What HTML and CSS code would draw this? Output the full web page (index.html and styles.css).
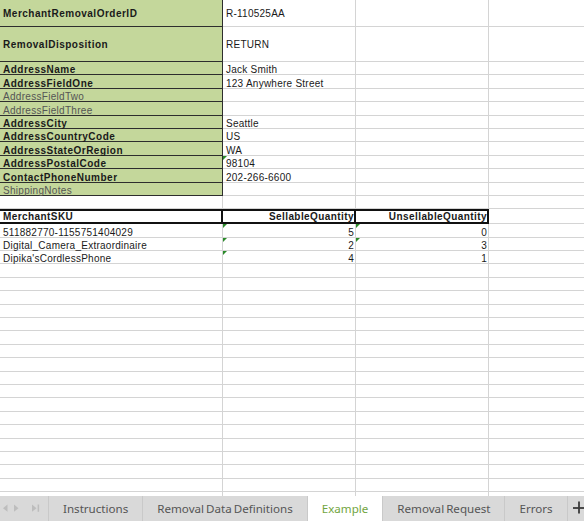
FILE: index.html
```html
<!DOCTYPE html>
<html>
<head>
<meta charset="utf-8">
<link rel="stylesheet" href="styles.css">
</head>
<body>
<div class="sheet">
  <div class="row t1"><div class="c k b">MerchantRemovalOrderID</div><div class="c">R-110525AA</div><div class="c"></div><div class="c"></div></div>
  <div class="row t2"><div class="c k b">RemovalDisposition</div><div class="c">RETURN</div><div class="c"></div><div class="c"></div></div>
  <div class="row"><div class="c k b">AddressName</div><div class="c">Jack Smith</div><div class="c"></div><div class="c"></div></div>
  <div class="row"><div class="c k b">AddressFieldOne</div><div class="c">123 Anywhere Street</div><div class="c"></div><div class="c"></div></div>
  <div class="row"><div class="c k dim">AddressFieldTwo</div><div class="c"></div><div class="c"></div><div class="c"></div></div>
  <div class="row"><div class="c k dim">AddressFieldThree</div><div class="c"></div><div class="c"></div><div class="c"></div></div>
  <div class="row"><div class="c k b">AddressCity</div><div class="c">Seattle</div><div class="c"></div><div class="c"></div></div>
  <div class="row"><div class="c k b">AddressCountryCode</div><div class="c">US</div><div class="c"></div><div class="c"></div></div>
  <div class="row"><div class="c k b">AddressStateOrRegion</div><div class="c">WA</div><div class="c"></div><div class="c"></div></div>
  <div class="row"><div class="c k b">AddressPostalCode</div><div class="c tri">98104</div><div class="c"></div><div class="c"></div></div>
  <div class="row"><div class="c k b">ContactPhoneNumber</div><div class="c">202-266-6600</div><div class="c"></div><div class="c"></div></div>
  <div class="row"><div class="c k dim">ShippingNotes</div><div class="c"></div><div class="c"></div><div class="c"></div></div>
  <div class="row"><div class="c"></div><div class="c"></div><div class="c"></div><div class="c"></div></div>
  <div class="row head"><div class="c h b">MerchantSKU</div><div class="c h b num">SellableQuantity</div><div class="c h b num">UnsellableQuantity</div><div class="c"></div></div>
  <div class="row"><div class="c">511882770-1155751404029</div><div class="c num tri">5</div><div class="c num tri">0</div><div class="c"></div></div>
  <div class="row"><div class="c">Digital_Camera_Extraordinaire</div><div class="c num tri">2</div><div class="c num tri">3</div><div class="c"></div></div>
  <div class="row"><div class="c">Dipika'sCordlessPhone</div><div class="c num tri">4</div><div class="c num">1</div><div class="c"></div></div>
  <div class="row"><div class="c"></div><div class="c"></div><div class="c"></div><div class="c"></div></div>
  <div class="row"><div class="c"></div><div class="c"></div><div class="c"></div><div class="c"></div></div>
  <div class="row"><div class="c"></div><div class="c"></div><div class="c"></div><div class="c"></div></div>
  <div class="row"><div class="c"></div><div class="c"></div><div class="c"></div><div class="c"></div></div>
  <div class="row"><div class="c"></div><div class="c"></div><div class="c"></div><div class="c"></div></div>
  <div class="row"><div class="c"></div><div class="c"></div><div class="c"></div><div class="c"></div></div>
  <div class="row"><div class="c"></div><div class="c"></div><div class="c"></div><div class="c"></div></div>
  <div class="row"><div class="c"></div><div class="c"></div><div class="c"></div><div class="c"></div></div>
  <div class="row"><div class="c"></div><div class="c"></div><div class="c"></div><div class="c"></div></div>
  <div class="row"><div class="c"></div><div class="c"></div><div class="c"></div><div class="c"></div></div>
  <div class="row"><div class="c"></div><div class="c"></div><div class="c"></div><div class="c"></div></div>
  <div class="row"><div class="c"></div><div class="c"></div><div class="c"></div><div class="c"></div></div>
  <div class="row"><div class="c"></div><div class="c"></div><div class="c"></div><div class="c"></div></div>
  <div class="row"><div class="c"></div><div class="c"></div><div class="c"></div><div class="c"></div></div>
  <div class="row"><div class="c"></div><div class="c"></div><div class="c"></div><div class="c"></div></div>
  <div class="row"><div class="c"></div><div class="c"></div><div class="c"></div><div class="c"></div></div>
  <div class="row"><div class="c"></div><div class="c"></div><div class="c"></div><div class="c"></div></div>
  <div class="row"><div class="c"></div><div class="c"></div><div class="c"></div><div class="c"></div></div>
</div>
<div class="tabs">
  <div class="nav">
    <svg width="48" height="25" viewBox="0 0 48 25">
      <polygon points="7.5,8.5 3,12.2 7.5,15.8" fill="#bdbdbd"/>
      <polygon points="14,8.5 18.5,12.2 14,15.8" fill="#bdbdbd"/>
      <polygon points="32,8.5 36.5,12.2 32,15.8" fill="#bdbdbd"/>
      <rect x="37.6" y="8.5" width="1.5" height="7.3" fill="#bdbdbd"/>
    </svg>
  </div>
  <div class="tab">Instructions</div>
  <div class="tab">Removal Data Definitions</div>
  <div class="tab active">Example</div>
  <div class="tab">Removal Request</div>
  <div class="tab">Errors</div>
  <div class="plus">
    <svg width="18" height="25" viewBox="0 0 18 25">
      <line x1="5" y1="12" x2="18" y2="12" stroke="#3a3a3a" stroke-width="1.8"/>
      <line x1="11" y1="5.5" x2="11" y2="17.5" stroke="#3a3a3a" stroke-width="1.8"/>
    </svg>
  </div>
</div>
</body>
</html>
```
FILE: styles.css
```css
html, body {
  margin: 0;
  padding: 0;
}
body {
  width: 584px;
  height: 521px;
  overflow: hidden;
  background: #fff;
  font-family: "Liberation Sans", Arial, sans-serif;
  font-size: 10px;
  color: #1a1a1a;
}
.sheet {
  height: 496px;
  overflow: hidden;
}
.row {
  display: grid;
  grid-template-columns: 223px 133px 133px 1fr;
  grid-template-rows: minmax(0, 1fr);
  height: 13.4px;
}
.row.t1 { height: 27px; }
.row.t2 { height: 35px; }
.row.head { height: 15px; }
.c {
  box-sizing: border-box;
  border-right: 1px solid #d4d4d4;
  border-bottom: 1px solid #d4d4d4;
  padding: 3.4px 1px 0 3px;
  line-height: 10px;
  white-space: nowrap;
  letter-spacing: 0.25px;
  min-width: 0;
}
.row .c:last-child { border-right: none; }
.row.t1 .c { padding-top: 8.7px; }
.row.t2 .c { padding-top: 13px; }
.k {
  background: #c4d79b;
  border-right-color: #2e2e2e;
  border-bottom-color: #2e2e2e;
}
.b {
  font-weight: bold;
  letter-spacing: 0.5px;
}
.dim {
  color: #555;
  letter-spacing: 0.3px;
}
.h {
  border-top: 2px solid #111;
  border-bottom: 2px solid #111;
  border-right: 2px solid #111;
  padding-top: 1px;
  letter-spacing: 0.42px;
}
.num {
  text-align: right;
  padding-right: 1px;
}
.h.num { padding-right: 0; }
.tri { position: relative; }
.tri::before {
  content: "";
  position: absolute;
  left: 0;
  top: 0;
  width: 0;
  height: 0;
  border-top: 4px solid #2a8a2a;
  border-right: 4px solid transparent;
}
.tabs {
  display: flex;
  height: 25px;
  background: #d9d9d9;
  font-family: "Noto Sans", "Open Sans", sans-serif;
  font-size: 11.6px;
  word-spacing: -1px;
  color: #555;
}
.nav {
  width: 48px;
  border-right: 1px solid #c9c9c9;
}
.nav svg, .plus svg { display: block; }
.tab {
  display: flex;
  align-items: center;
  padding: 0 14px;
  border-right: 1px solid #c9c9c9;
  white-space: nowrap;
}
.tab.active {
  background: #fff;
  color: #72a541;
}
.plus {
  flex: 1;
}
```
